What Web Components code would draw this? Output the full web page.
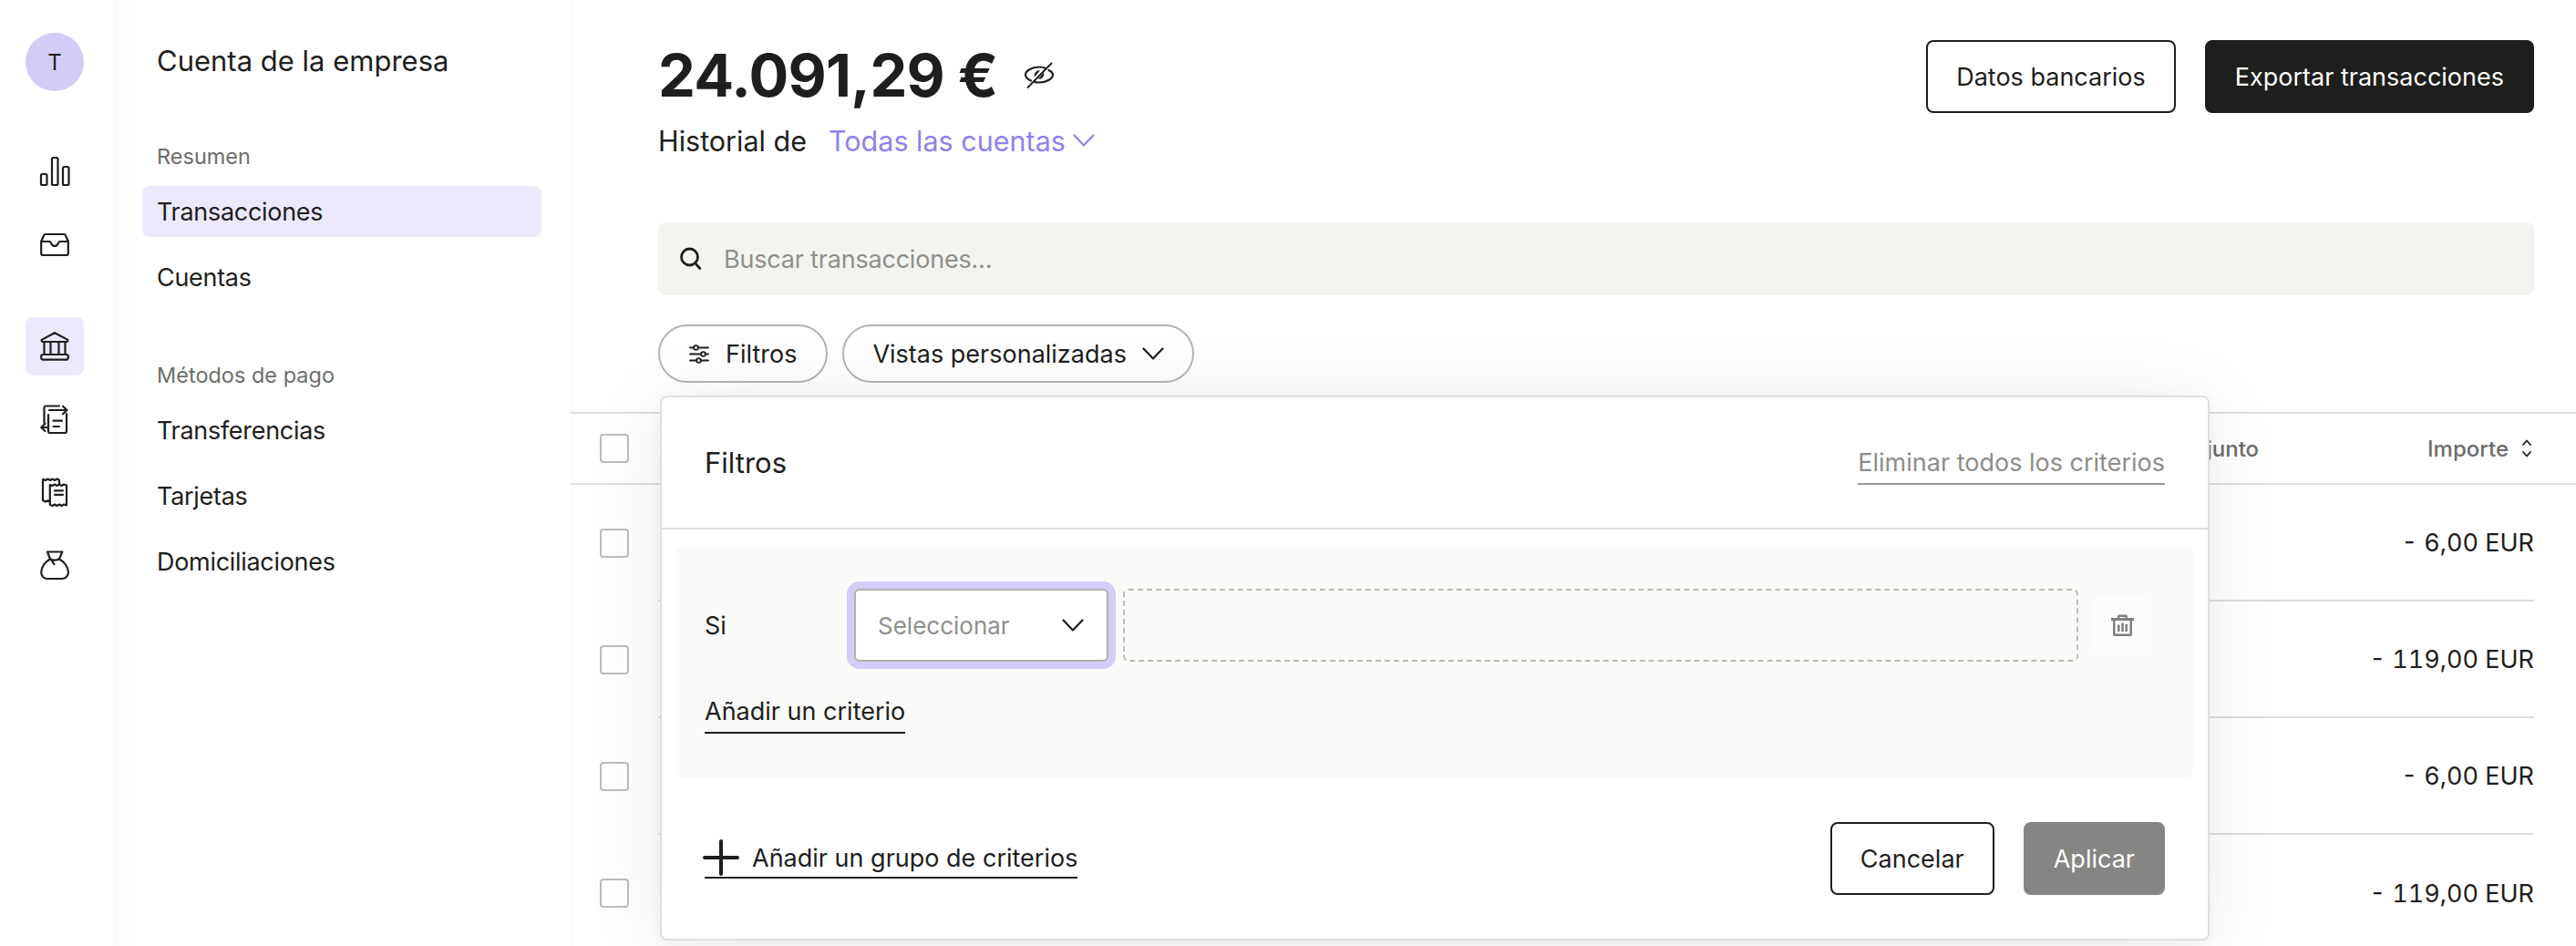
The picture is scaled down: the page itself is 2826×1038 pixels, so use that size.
<!DOCTYPE html>
<html lang="es">
<head>
<meta charset="utf-8">
<title>Transacciones</title>
<style>
  html, body { margin: 0; height: 100%; background: #fff; overflow: hidden; }
  body { font-family: Inter, "Liberation Sans", sans-serif; color: #1e1e1c; font-size: 27px; }
</style>
</head>
<body>
<app-shell>
  <rail-nav slot="rail"></rail-nav>
  <side-nav slot="nav" heading="Cuenta de la empresa">
    <side-label>Resumen</side-label>
    <side-link active>Transacciones</side-link>
    <side-link>Cuentas</side-link>
    <side-label second>Métodos de pago</side-label>
    <side-link>Transferencias</side-link>
    <side-link>Tarjetas</side-link>
    <side-link>Domiciliaciones</side-link>
  </side-nav>
  <main-panel slot="main">
    <balance-head amount="24.091,29 €" account="Todas las cuentas"></balance-head>
    <search-box placeholder="Buscar transacciones..."></search-box>
    <filter-chips></filter-chips>
    <tx-table>
      <tx-row amount="- 6,00 EUR"></tx-row>
      <tx-row amount="- 119,00 EUR"></tx-row>
      <tx-row amount="- 6,00 EUR"></tx-row>
      <tx-row amount="- 119,00 EUR" last></tx-row>
    </tx-table>
    <filter-panel></filter-panel>
  </main-panel>
</app-shell>

<script>
const ICONS = {
  bars: `<rect x="1" y="19" width="6.5" height="12" rx="1.5"/><rect x="13" y="1" width="6.5" height="30" rx="1.5"/><rect x="25" y="11" width="6.5" height="20" rx="1.5"/>`,
  inbox: `<path d="M1.2 13 4 6.4Q4.6 5 6 5H26Q27.4 5 28 6.4L30.8 13V26a2 2 0 0 1-2 2H3.2a2 2 0 0 1-2-2Z"/><path d="M1.2 13H10.5c1.6 0 1.6 5 5.500 5s3.900-5 5.500-5H30.800"/>`,
  bank: `<path d="M2.500 11Q.6 9.500 2.500 8.400L16 1.200 29.500 8.400Q31.400 9.500 29.500 11Z"/><path d="M4.500 11V25M11.500 11V25M20.500 11V25M27.500 11V25"/><rect x="1.200" y="25" width="29.600" height="5.600" rx="2"/>`,
  transfer: `<path d="M4.500 20V3.500a2 2 0 0 1 2-2H21"/><path d="M10 6H29M25 1.800 29.500 6 25 10.200"/><path d="M9 11V29a2 2 0 0 0 2 2H27a2 2 0 0 0 2-2V10"/><path d="M14.500 17.700H24M14.500 24H21"/><path d="M9 25H1.500M5.500 21 1.200 25 5.500 29"/>`,
  receipts: `<path d="M11 26.500 8.500 25.200 6 26.500 3 25V1.800L6 3 8.500 1.500 11 3 13.500 1.500 16 3 18.500 1.500 21 2.800V7.500"/><path d="M10.800 8 13.500 9 16 7.500 18.500 9 21 7.500 23.500 9 26 7.500 29 8.500V30.500L26 29.500 23.500 31 21 29.500 18.500 31 16 29.500 13.500 31 10.800 29.800Z"/><path d="M16 14.300H25M16 18.800H25"/>`,
  bag: `<path d="M8 1.500H24.300L21 9.500C26 12 31 18 31 24 31 28.500 27.500 31 24 31H8C4.500 31 1.200 28.500 1.200 24 1.200 18 6 12 11 9.500Z"/><path d="M11 9.500C14 10.800 18 10.800 21 9.500M12.500 10C13.500 12 14 13.500 15.500 15"/>`,
  eye: `<path d="M7 22.500C3.500 21 1 18.500 1 16 1 12 7.500 7.500 16 7.500 19 7.500 21.500 8 23.500 9"/><path d="M26.500 11C29.500 12.500 31 14.300 31 16 31 20 24.500 24.500 16 24.500 13.800 24.500 12 24.200 10.500 23.700"/><path d="M3.500 30 29.500 3.500" stroke-width="1.800"/><path d="M17 11.300a5.500 5.500 0 0 0-6 7.200ZM15 20.700a5.500 5.500 0 0 0 6-7.200Z" fill="currentColor" stroke="none"/>`,
  search: `<circle cx="10.500" cy="10" r="9"/><path d="M16.800 16.800 21.800 22.500"/>`,
  sliders: `<circle cx="6.500" cy="3.500" r="2.400"/><circle cx="14.500" cy="10.500" r="2.400"/><circle cx="9.500" cy="17.500" r="2.400"/><path d="M0 3.500H4M9 3.500H20M0 10.500H12M17 10.500H20M0 17.500H7M12 17.500H20"/>`,
  chevron: `<path d="M1.500 1.500 12 12.500 22.500 1.500"/>`,
  sort: `<path d="M1 6 5 1.500 9 6M1 14 5 18.500 9 14"/>`,
  plus: `<path d="M0 18H36M18 0V36"/>`,
  trash: `<path d="M7 4.500V2.500Q7 .6 9 .6H16Q18 .6 18 2.500V4.500H15.500V3H9.500V4.500Z" fill="currentColor" stroke="none"/><path d="M0 4H25V7H23V22Q23 24 21 24H4Q2 24 2 22V7H0ZM4.500 7V21.500H20.500V7Z" fill="currentColor" stroke="none" fill-rule="evenodd"/><path d="M7 11.500H9.500V19H7ZM11.300 9.500H13.800V19H11.300ZM15.500 11H18V19H15.500Z" fill="currentColor" stroke="none"/>`,
};

class UiIcon extends HTMLElement {
  connectedCallback() {
    const name = this.getAttribute("name");
    const w = this.getAttribute("w") || 32;
    const h = this.getAttribute("h") || 32;
    const sw = this.getAttribute("sw") || 2.2;
    this.attachShadow({ mode: "open" }).innerHTML = `
      <style>
        :host { display: inline-flex; flex: none; }
        svg { display: block; overflow: visible; }
      </style>
      <svg width="${w}" height="${h}" viewBox="0 0 ${w} ${h}" fill="none" stroke="currentColor"
           stroke-width="${sw}" stroke-linecap="round" stroke-linejoin="round">${ICONS[name]}</svg>`;
  }
}
customElements.define("ui-icon", UiIcon);

class AppShell extends HTMLElement {
  constructor() {
    super();
    this.attachShadow({ mode: "open" }).innerHTML = `
      <style>
        :host { display: grid; grid-template-columns: 124px 502px 1fr; height: 1038px; }
      </style>
      <slot name="rail"></slot><slot name="nav"></slot><slot name="main"></slot>`;
  }
}
customElements.define("app-shell", AppShell);

class RailNav extends HTMLElement {
  constructor() {
    super();
    const items = [["bars"], ["inbox"], ["bank", true], ["transfer"], ["receipts"], ["bag"]];
    this.attachShadow({ mode: "open" }).innerHTML = `
      <style>
        :host { display: flex; flex-direction: column; align-items: center; padding: 36px 4px 0 0; background: #fff; }
        .avatar {
          width: 64px; height: 64px; border-radius: 50%; background: #d4ccf7;
          display: flex; align-items: center; justify-content: center; font-size: 24px; margin-bottom: 56px;
        }
        .item { width: 64px; height: 64px; border-radius: 8px; display: flex; align-items: center; justify-content: center; margin-bottom: 16px; }
        .item.gap { margin-top: 32px; }
        .item.active { background: #ede9fc; }
      </style>
      <div class="avatar">T</div>
      ${items.map(([n, a], i) => `<div class="item ${a ? "active" : ""} ${i === 2 ? "gap" : ""}"><ui-icon name="${n}"></ui-icon></div>`).join("")}`;
  }
}
customElements.define("rail-nav", RailNav);

class SideNav extends HTMLElement {
  constructor() {
    super();
    this.attachShadow({ mode: "open" }).innerHTML = `
      <style>
        :host {
          display: flex; flex-direction: column; padding: 0 32px;
          background: linear-gradient(90deg, #fbfbfa 0, #fefefe 12px, #fff 40px);
        }
        h1 { font: inherit; font-size: 31px; line-height: 40px; margin: 47px 0 69px 16px; font-weight: 400; }
      </style>
      <h1></h1>
      <slot></slot>`;
  }
  connectedCallback() {
    this.shadowRoot.querySelector("h1").textContent = this.getAttribute("heading");
  }
}
customElements.define("side-nav", SideNav);

class SideLabel extends HTMLElement {
  constructor() {
    super();
    this.attachShadow({ mode: "open" }).innerHTML = `
      <style>
        :host { display: block; font-size: 23.5px; line-height: 32px; color: #6d6d6a; padding-left: 16px; margin-bottom: 16px; }
        :host([second]) { margin-top: 48px; margin-bottom: 16px; }
      </style>
      <slot></slot>`;
  }
}
customElements.define("side-label", SideLabel);

class SideLink extends HTMLElement {
  constructor() {
    super();
    this.attachShadow({ mode: "open" }).innerHTML = `
      <style>
        :host { display: flex; align-items: center; height: 56px; padding-left: 16px; border-radius: 8px; margin-bottom: 16px; letter-spacing: -0.3px; }
        :host([active]) { background: #ede9fc; }
      </style>
      <slot></slot>`;
  }
}
customElements.define("side-link", SideLink);

class MainPanel extends HTMLElement {
  constructor() {
    super();
    this.attachShadow({ mode: "open" }).innerHTML = `
      <style>
        :host { display: block; position: relative; box-shadow: inset 2px 0 0 #fafaf9; overflow: hidden; }
      </style>
      <slot></slot>`;
  }
}
customElements.define("main-panel", MainPanel);

class UiButton extends HTMLElement {
  constructor() {
    super();
    this.attachShadow({ mode: "open" }).innerHTML = `
      <style>
        :host {
          display: inline-flex; align-items: center; justify-content: center; box-sizing: border-box;
          height: 80px; padding: 0 31px; border-radius: 8px; border: 2px solid #1e1e1c; background: #fff;
        }
        :host([variant="dark"]) { background: #1e1e1c; color: #fff; }
        :host([variant="muted"]) { background: #858583; border-color: #858583; color: #fff; }
      </style>
      <slot></slot>`;
  }
}
customElements.define("ui-button", UiButton);

class BalanceHead extends HTMLElement {
  connectedCallback() {
    this.attachShadow({ mode: "open" }).innerHTML = `
      <style>
        :host { display: flex; justify-content: space-between; align-items: flex-start; padding: 44px 46px 0 96px; height: 200px; box-sizing: border-box; }
        .amount { display: flex; align-items: center; height: 76px; font-size: 65px; font-weight: 700; letter-spacing: -0.7px; }
        .amount ui-icon { margin-left: 29px; }
        .history { display: flex; align-items: center; height: 40px; margin-top: 14px; font-size: 30.5px; }
        .account { color: #9181ee; margin-left: 24px; }
        .history ui-icon { color: #9181ee; margin-left: 8px; }
        .actions { display: flex; gap: 32px; }
      </style>
      <div>
        <div class="amount">${this.getAttribute("amount")}<ui-icon name="eye"></ui-icon></div>
        <div class="history">Historial de<span class="account">${this.getAttribute("account")}</span><ui-icon name="chevron" w="24" h="14"></ui-icon></div>
      </div>
      <div class="actions">
        <ui-button>Datos bancarios</ui-button>
        <ui-button variant="dark">Exportar transacciones</ui-button>
      </div>`;
  }
}
customElements.define("balance-head", BalanceHead);

class SearchBox extends HTMLElement {
  connectedCallback() {
    this.attachShadow({ mode: "open" }).innerHTML = `
      <style>
        :host {
          display: flex; align-items: center; box-sizing: border-box; height: 80px;
          margin: 44px 46px 0 96px; padding-left: 24px; background: #f3f3ef; border-radius: 8px;
        }
        span { margin-left: 24px; color: #8f8f8c; letter-spacing: -0.2px; }
      </style>
      <ui-icon name="search" w="24" h="24" sw="2.800"></ui-icon><span>${this.getAttribute("placeholder")}</span>`;
  }
}
customElements.define("search-box", SearchBox);

class ChipButton extends HTMLElement {
  constructor() {
    super();
    this.attachShadow({ mode: "open" }).innerHTML = `
      <style>
        :host {
          display: inline-flex; align-items: center; box-sizing: border-box; height: 64px;
          padding: 0 31px; border: 2px solid #b5b5b0; border-radius: 32px; background: #fff;
        }
        :host([wide]) { padding: 0 32px 0 33px; }
      </style>
      <slot></slot>`;
  }
}
customElements.define("chip-button", ChipButton);

class FilterChips extends HTMLElement {
  constructor() {
    super();
    this.attachShadow({ mode: "open" }).innerHTML = `
      <style>
        :host { display: flex; gap: 16px; margin: 32px 0 0 96px; }
        .f { margin-right: 19px; }
        .c { margin-left: 17px; }
      </style>
      <chip-button wide><ui-icon class="f" name="sliders" w="20" h="20" sw="1.800"></ui-icon>Filtros</chip-button>
      <chip-button>Vistas personalizadas<ui-icon class="c" name="chevron" w="24" h="14"></ui-icon></chip-button>`;
  }
}
customElements.define("filter-chips", FilterChips);

class CheckBox extends HTMLElement {
  constructor() {
    super();
    this.attachShadow({ mode: "open" }).innerHTML = `
      <style>
        :host { display: block; flex: none; box-sizing: border-box; width: 32px; height: 32px; border: 2px solid #bdbdb8; border-radius: 4px; background: #fff; }
      </style>`;
  }
}
customElements.define("check-box", CheckBox);

class TxTable extends HTMLElement {
  constructor() {
    super();
    this.attachShadow({ mode: "open" }).innerHTML = `
      <style>
        :host { display: block; margin-top: 32px; }
        .head {
          display: flex; align-items: center; box-sizing: border-box; height: 80px;
          padding: 0 49px 0 32px; border-top: 2px solid #deded9; border-bottom: 2px solid #deded9;
          font-size: 24px; font-weight: 500; color: #6c6c6a;
        }
        .attach { margin-left: auto; }
        .amount { margin-left: 185px; }
        ui-icon { margin-left: 15px; color: #1e1e1c; }
      </style>
      <div class="head">
        <check-box></check-box>
        <span class="attach">Adjunto</span>
        <span class="amount">Importe</span>
        <ui-icon name="sort" w="10" h="20" sw="1.800"></ui-icon>
      </div>
      <slot></slot>`;
  }
}
customElements.define("tx-table", TxTable);

class TxRow extends HTMLElement {
  connectedCallback() {
    this.attachShadow({ mode: "open" }).innerHTML = `
      <style>
        :host { display: flex; align-items: center; height: 128px; padding: 0 46px 0 32px; }
        .cell {
          flex: 1; height: 100%; margin-left: 32px; box-sizing: border-box; display: flex;
          align-items: center; justify-content: flex-end; border-bottom: 2px solid #deded9;
          font-variant-numeric: tabular-nums;
        }
        :host([last]) .cell { border-bottom: 0; }
      </style>
      <check-box></check-box><div class="cell">${this.getAttribute("amount")}</div>`;
  }
}
customElements.define("tx-row", TxRow);

class FilterPanel extends HTMLElement {
  constructor() {
    super();
    this.attachShadow({ mode: "open" }).innerHTML = `
      <style>
        :host {
          position: absolute; left: 98px; top: 434px; width: 1700px; height: 598px; box-sizing: border-box;
          background: #fff; border: 2px solid #e0e0db; border-radius: 8px;
          box-shadow: 0 8px 90px rgba(30, 30, 28, .08), 0 2px 14px rgba(30, 30, 28, .04);
        }
        .head {
          display: flex; align-items: center; justify-content: space-between; box-sizing: border-box;
          height: 145px; padding: 0 47px 0 47px; border-bottom: 2px solid #e0e0db;
        }
        .title { font-size: 31px; }
        .clear { color: #8d8d8a; border-bottom: 2px solid #969694; line-height: 40px; padding-bottom: 2px; margin-top: 4px; }
        .group { margin: 17px 16px 0; height: 256px; box-sizing: border-box; padding: 48px 46px 0 31px; background: #fafaf8; border-radius: 8px; }
        .row { display: flex; align-items: center; gap: 16px; height: 80px; }
        .si { width: 148px; }
        .select {
          box-sizing: border-box; width: 279px; height: 80px; padding: 0 25px 0 24px; display: flex;
          align-items: center; justify-content: space-between; background: #fff; border: 2px solid #b0b0ac;
          border-radius: 6px; box-shadow: 0 0 0 8px #d5cdf8; color: #8f8f8c; font-size: 26px;
        }
        .select ui-icon { color: #1e1e1c; }
        .empty { flex: 1; height: 80px; box-sizing: border-box; border: 2px dashed #bcbcb8; border-radius: 6px; }
        .trash { width: 64px; height: 64px; display: flex; align-items: center; justify-content: center; background: #fcfcfb; border-radius: 8px; color: #7f7f7d; }
        .add { display: inline-block; margin-top: 35px; line-height: 40px; padding-bottom: 2px; border-bottom: 2px solid #1e1e1c; }
        .foot { display: flex; align-items: center; justify-content: space-between; padding: 48px 47px 0 47px; }
        .add-group { display: flex; align-items: center; gap: 16px; height: 42px; border-bottom: 2px solid #1e1e1c; }
        .actions { display: flex; gap: 32px; }
      </style>
      <div class="head"><span class="title">Filtros</span><span class="clear">Eliminar todos los criterios</span></div>
      <div class="group">
        <div class="row">
          <span class="si">Si</span>
          <div class="select">Seleccionar<ui-icon name="chevron" w="24" h="14"></ui-icon></div>
          <div class="empty"></div>
          <div class="trash"><ui-icon name="trash" w="25" h="24"></ui-icon></div>
        </div>
        <span class="add">Añadir un criterio</span>
      </div>
      <div class="foot">
        <div class="add-group"><ui-icon name="plus" w="36" h="36" sw="4"></ui-icon>Añadir un grupo de criterios</div>
        <div class="actions"><ui-button>Cancelar</ui-button><ui-button variant="muted">Aplicar</ui-button></div>
      </div>`;
  }
}
customElements.define("filter-panel", FilterPanel);
</script>
</body>
</html>
